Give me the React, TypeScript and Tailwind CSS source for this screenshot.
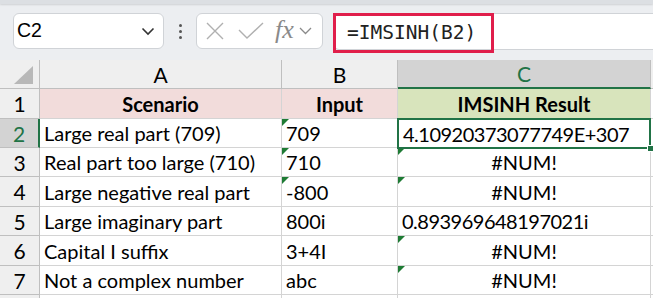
import React from "react";

const ROW_H = [30, 29, 29, 30, 29, 30, 29, 30];

type Cell = { text: string; align?: "left" | "center"; tri?: boolean; tight?: boolean };

const rows: { a: Cell; b: Cell; c: Cell }[] = [
  { a: { text: "Large real part (709)" }, b: { text: "709", tri: true }, c: { text: "4.10920373077749E+307", tight: true } },
  { a: { text: "Real part too large (710)" }, b: { text: "710", tri: true }, c: { text: "#NUM!", align: "center", tri: true } },
  { a: { text: "Large negative real part" }, b: { text: "-800", tri: true }, c: { text: "#NUM!", align: "center", tri: true } },
  { a: { text: "Large imaginary part" }, b: { text: "800i" }, c: { text: "0.893969648197021i", tight: true } },
  { a: { text: "Capital I suffix" }, b: { text: "3+4I" }, c: { text: "#NUM!", align: "center", tri: true } },
  { a: { text: "Not a complex number" }, b: { text: "abc" }, c: { text: "#NUM!", align: "center", tri: true } },
];

const font = { fontFamily: "Lato, 'Open Sans', sans-serif" };

function Tri() {
  return (
    <div className="absolute left-0 top-0 w-0 h-0 border-t-[7px] border-t-[#1e7b34] border-r-[7px] border-r-transparent" />
  );
}

function DataCell({ cell, w }: { cell: Cell; w: string }) {
  return (
    <div
      className={`relative ${w} h-full shrink-0 border-r border-b border-[#d4d4d4] bg-white flex items-center px-[4px] text-[20px] text-black leading-none ${
        cell.align === "center" ? "justify-center" : "justify-start"
      }`}
    >
      {cell.tri && <Tri />}
      <span className={`whitespace-nowrap ${cell.tight ? "tracking-[-0.5px]" : ""}`}>{cell.text}</span>
    </div>
  );
}

export default function App() {
  return (
    <div className="w-[653px] h-[298px] overflow-hidden bg-[#eceef1] relative" style={font}>
      {/* top strip */}
      <div className="h-[4px] bg-[#dcdfe3] shadow-[0_1px_2px_rgba(0,0,0,0.12)]" />
      {/* toolbar */}
      <div className="h-[56px] flex items-start pt-[9px] pl-[13px]">
        <div className="w-[151px] h-[36px] bg-white border border-[#d0d3d7] rounded-[6px] flex items-center justify-between pl-[3px] pr-[8px]">
          <span className="text-[19.5px] text-black" style={{ fontFamily: "'Liberation Sans', Arial, sans-serif" }}>
            C2
          </span>
          <svg width="14" height="9" viewBox="0 0 14 9">
            <path d="M1.5 1.5 L7 7 L12.5 1.5" fill="none" stroke="#333" strokeWidth="1.6" />
          </svg>
        </div>
        <div className="w-[32px] h-[36px] flex flex-col items-center justify-center gap-[3px]">
          <div className="w-[3px] h-[3px] rounded-full bg-[#555]" />
          <div className="w-[3px] h-[3px] rounded-full bg-[#555]" />
          <div className="w-[3px] h-[3px] rounded-full bg-[#555]" />
        </div>
        <div className="w-[127px] h-[36px] bg-white border border-[#d0d3d7] rounded-[6px] flex items-center pl-[9px] pr-[4px]">
          <svg width="18" height="18" viewBox="0 0 18 18">
            <path d="M1 1 L17 17 M17 1 L1 17" stroke="#b0b0b0" strokeWidth="1.4" fill="none" />
          </svg>
          <svg width="26" height="18" viewBox="0 0 26 18" className="ml-[14px]">
            <path d="M1 8 L9 16 L25 1" stroke="#b0b0b0" strokeWidth="1.4" fill="none" />
          </svg>
          <span
            className="ml-[11px] text-[26px] italic text-[#8a8a8a] leading-none -mt-[2px]"
            style={{ fontFamily: "'Liberation Serif', 'Times New Roman', serif" }}
          >
            fx
          </span>
          <svg width="13" height="8" viewBox="0 0 13 8" className="ml-[5px]">
            <path d="M1 1 L6.5 6.5 L12 1" fill="none" stroke="#8a8a8a" strokeWidth="1.3" />
          </svg>
        </div>
        <div className="ml-[10px] flex-1 h-[37px] bg-white border border-[#d0d3d7] border-r-0 rounded-l-[6px] relative">
          <div className="absolute left-[-1px] top-[-1px] w-[161px] h-[40px] border-[3px] border-[#e01e4b]" />
          <div
            className="absolute left-[13px] top-0 h-[37px] flex items-center text-[19.5px] text-[#222]"
            style={{ fontFamily: "'DejaVu Sans Mono', 'Liberation Mono', monospace" }}
          >
            =IMSINH(B2)
          </div>
        </div>
      </div>
      {/* grid */}
      <div className="flex flex-col">
        {/* column headers */}
        <div className="flex h-[29px] text-[21px] text-black leading-none">
          <div className="relative w-[40px] shrink-0 h-full bg-[#efefef] border-r border-b border-[#bfbfbf]">
            <svg width="20" height="18" viewBox="0 0 20 18" className="absolute right-[5px] bottom-[4px]">
              <polygon points="19,0 19,18 0,18" fill="#b8b8b8" />
            </svg>
          </div>
          <div className="w-[242px] shrink-0 h-full bg-[#efefef] border-r border-b border-[#bfbfbf] flex items-center justify-center">A</div>
          <div className="w-[116px] shrink-0 h-full bg-[#efefef] border-r border-b border-[#bfbfbf] flex items-center justify-center">B</div>
          <div className="w-[253px] shrink-0 h-full bg-[#d3d3d3] border-r border-[#bfbfbf] border-b-2 border-b-[#217346] flex items-center justify-center text-[#217346]">
            C
          </div>
          <div className="flex-1 h-full bg-[#efefef] border-b border-[#bfbfbf]" />
        </div>
        {/* row 1 */}
        <div className="flex h-[30px] text-[20px] leading-none">
          <div className="w-[40px] shrink-0 h-full bg-[#efefef] border-r border-b border-[#bfbfbf] flex items-center justify-center text-[21px]">1</div>
          <div className="w-[242px] shrink-0 h-full bg-[#f2dcdb] border-r border-b border-[#d4d4d4] flex items-center justify-center font-bold">Scenario</div>
          <div className="w-[116px] shrink-0 h-full bg-[#f2dcdb] border-r border-b border-[#d4d4d4] flex items-center justify-center font-bold">Input</div>
          <div className="w-[253px] shrink-0 h-full bg-[#d8e4bc] border-r border-b border-[#d4d4d4] flex items-center justify-center font-bold">IMSINH Result</div>
          <div className="flex-1 h-full bg-white border-b border-[#d4d4d4]" />
        </div>
        {rows.map((r, i) => {
          const selected = i === 0;
          return (
            <div key={i} className="flex shrink-0" style={{ height: ROW_H[i + 1] }}>
              <div
                className={`w-[40px] shrink-0 h-full border-b border-[#bfbfbf] flex items-center justify-center text-[21px] leading-none ${
                  selected ? "bg-[#d3d3d3] text-[#217346] border-r-2 border-r-[#217346]" : "bg-[#efefef] text-black border-r"
                }`}
              >
                {i + 2}
              </div>
              <DataCell cell={r.a} w="w-[242px]" />
              <DataCell cell={r.b} w="w-[116px]" />
              {selected ? (
                <div className="relative w-[253px] shrink-0 h-full bg-white flex items-center text-[20px] leading-none">
                  <div className="absolute left-[-1px] top-[-1px] right-0 bottom-[-1px] border-2 border-[#217346] z-10" />
                  <div className="absolute right-[-3px] bottom-[-4px] w-[7px] h-[7px] bg-[#217346] border border-white z-20" />
                  <span className="pl-[5px] whitespace-nowrap tracking-[-0.5px]">{r.c.text}</span>
                </div>
              ) : (
                <DataCell cell={r.c} w="w-[253px]" />
              )}
              <div className="flex-1 h-full bg-white border-b border-[#d4d4d4]" />
            </div>
          );
        })}
        {/* partial row 8 */}
        <div className="flex h-[30px] shrink-0">
          <div className="w-[40px] shrink-0 h-full bg-[#efefef] border-r border-[#bfbfbf]" />
          <div className="w-[242px] shrink-0 h-full bg-white border-r border-[#d4d4d4]" />
          <div className="w-[116px] shrink-0 h-full bg-white border-r border-[#d4d4d4]" />
          <div className="w-[253px] shrink-0 h-full bg-white border-r border-[#d4d4d4]" />
          <div className="flex-1 h-full bg-white" />
        </div>
      </div>
    </div>
  );
}
